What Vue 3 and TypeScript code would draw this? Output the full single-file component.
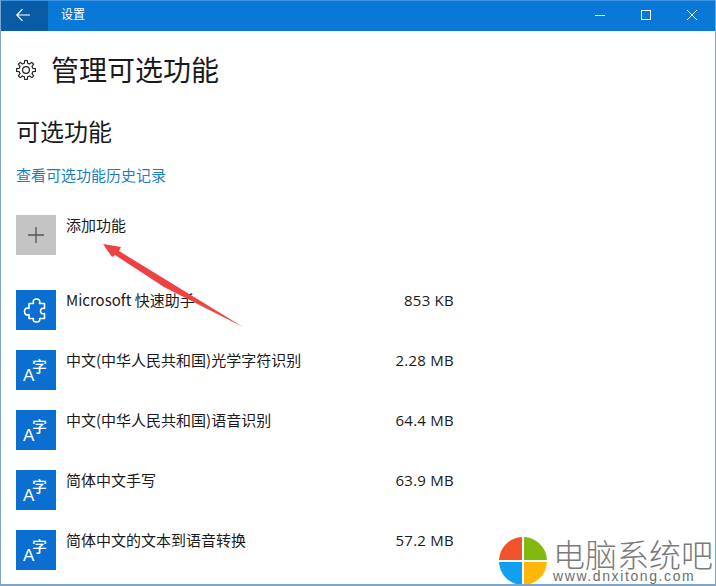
<script setup lang="ts">
interface Feature { name: string; size: string; kind: 'puzzle' | 'lang' }
const features: Feature[] = [
  { name: 'Microsoft 快速助手', size: '853 KB', kind: 'puzzle' },
  { name: '中文(中华人民共和国)光学字符识别', size: '2.28 MB', kind: 'lang' },
  { name: '中文(中华人民共和国)语音识别', size: '64.4 MB', kind: 'lang' },
  { name: '简体中文手写', size: '63.9 MB', kind: 'lang' },
  { name: '简体中文的文本到语音转换', size: '57.2 MB', kind: 'lang' },
]

function gearPath(teeth: number, outer: number, inner: number, c: number): string {
  const pts: string[] = []
  const step = (Math.PI * 2) / teeth
  const at = (r: number, a: number) =>
    `${(c + r * Math.cos(a)).toFixed(2)} ${(c + r * Math.sin(a)).toFixed(2)}`
  for (let i = 0; i < teeth; i++) {
    const a = i * step
    pts.push(at(inner, a - step * 0.3), at(outer, a - step * 0.17), at(outer, a + step * 0.17), at(inner, a + step * 0.3))
  }
  return `M${pts.join('L')}Z`
}
const gear = gearPath(8, 9.6, 7, 10)
</script>

<template>
  <div class="window">
    <header class="titlebar">
      <div class="back">
        <svg width="16" height="14" viewBox="0 0 16 14" fill="none" stroke="#fff" stroke-width="1.2"><path d="M15 7H2M7.500 1.200 1.800 7l5.700 5.800" /></svg>
      </div>
      <span class="app-title">设置</span>
      <div class="controls">
        <svg width="12" height="12" viewBox="0 0 12 12" fill="none" stroke="#fff" stroke-width="1"><path d="M1 6.500h10" /></svg>
        <svg width="12" height="12" viewBox="0 0 12 12" fill="none" stroke="#fff" stroke-width="1"><rect x="1.500" y="1.500" width="9" height="9" /></svg>
        <svg width="12" height="12" viewBox="0 0 12 12" fill="none" stroke="#fff" stroke-width="1"><path d="M1 1l10 10M11 1 1 11" /></svg>
      </div>
    </header>

    <main class="content">
      <div class="page-head">
        <svg class="gear" width="20" height="20" viewBox="0 0 20 20" fill="none" stroke="#222" stroke-width="1.200" stroke-linejoin="round">
          <circle cx="10" cy="10" r="3.400" />
          <path :d="gear" />
        </svg>
        <h1>管理可选功能</h1>
      </div>
      <h2>可选功能</h2>
      <a class="history">查看可选功能历史记录</a>

      <div class="add-row">
        <div class="tile add-tile">
          <svg width="16" height="16" viewBox="0 0 16 16" stroke="#555" stroke-width="1.300"><path d="M8 0v16M0 8h16" /></svg>
        </div>
        <span class="name">添加功能</span>
      </div>

      <ul class="list">
        <li v-for="f in features" :key="f.name" class="row">
          <div class="tile blue-tile">
            <svg v-if="f.kind === 'puzzle'" width="40" height="40" viewBox="0 0 40 40" fill="none" stroke="#fff" stroke-width="1.600" stroke-linejoin="round">
              <path d="M13 13.500h4.500c-1-3 .5-4.500 3-4.500s4 1.500 3 4.500h5v5c-2.500-.8-4 .5-4 2.500s1.500 3.300 4 2.500v5h-5c1 2.500-.5 3.500-3 3.500s-4-1-3-3.500H13v-4c-2.500 1-4.500 0-4.500-3s2-4 4.500-3z" />
            </svg>
            <template v-else>
              <span class="glyph-a">A</span><span class="glyph-zi">字</span>
            </template>
          </div>
          <span class="name">{{ f.name }}</span>
          <span class="size">{{ f.size }}</span>
        </li>
      </ul>
    </main>

    <svg class="arrow" width="150" height="95" viewBox="0 0 150 95">
      <path d="M1 3 19 6 17 10 141 86 62 46 13 14 10 16z" fill="#ee4242" />
    </svg>

    <div class="watermark">
      <svg width="50" height="50" viewBox="0 0 50 50">
        <path d="M24 1v23H1A24 24 0 0 1 24 1z" fill="#f0532b" />
        <path d="M26 1a24 24 0 0 1 23 23H26z" fill="#82b80f" />
        <path d="M1 26h23v23A24 24 0 0 1 1 26z" fill="#10a0ef" />
        <path d="M26 26h23a24 24 0 0 1-23 23z" fill="#ffb80a" />
      </svg>
      <div class="brand">
        <span class="brand-cn">电脑系统吧</span>
        <span class="brand-url">www.dnxitong.com</span>
      </div>
    </div>
  </div>
</template>

<style scoped>
.window {
  position: relative;
  box-sizing: border-box;
  width: 716px;
  height: 586px;
  overflow: hidden;
  background: #fff;
  border-left: 1px solid #7ba6d0;
  border-right: 1px solid #7ba6d0;
  border-bottom: 2px solid #7ba6d0;
  font-family: "Noto Sans CJK SC", "Open Sans", sans-serif;
  color: #1a1a1a;
}
.titlebar {
  display: flex;
  align-items: center;
  height: 31px;
  background: #0a78d7;
  border-top: 1px solid #3b94e4;
  box-sizing: border-box;
  color: #fff;
}
.back {
  display: flex;
  align-items: center;
  justify-content: center;
  width: 47px;
  height: 100%;
  background: #0a5ba6;
}
.back svg { margin-left: -4px; margin-top: -2px; }
.app-title { margin-left: 13px; font-size: 12px; line-height: 12px; margin-top: -4px; }
.controls {
  margin-left: auto;
  display: flex;
  gap: 34px;
  padding-right: 17px;
  margin-top: -2px;
}
.content { padding: 0 15px; }
.page-head {
  display: flex;
  align-items: center;
  gap: 16px;
  height: 40px;
  margin-top: 18px;
}
.gear { flex: none; margin-top: 2px; }
h1 { margin: 0 0 0 -1px; font-size: 28px; font-weight: 400; line-height: 40px; }
h2 { margin: 25px 0 0; font-size: 24px; font-weight: 400; line-height: 34px; }
.history {
  display: block;
  margin-top: 17px;
  font-size: 15px;
  line-height: 20px;
  color: #1a7fc0;
}
.add-row { display: flex; margin-top: 30px; }
.tile {
  flex: none;
  display: flex;
  align-items: center;
  justify-content: center;
  position: relative;
  width: 40px;
  height: 40px;
}
.add-tile { background: #c4c4c4; }
.blue-tile { background: #0a6fd0; color: #fff; }
.name {
  margin-left: 10px;
  font-size: 15px;
  line-height: 20px;
}
.list { list-style: none; margin: 35px 0 0; padding: 0; width: 438px; }
.row { display: flex; height: 40px; margin-bottom: 20px; }
.size {
  margin-left: auto;
  font-size: 15px;
  line-height: 20px;
  letter-spacing: 0.25px;
  font-family: "Open Sans", sans-serif;
}
.glyph-a {
  position: absolute;
  left: 7px;
  bottom: 6px;
  font: 400 17px/17px "Liberation Sans", sans-serif;
}
.glyph-zi {
  position: absolute;
  left: 16px;
  top: 8px;
  font-size: 15px;
  line-height: 15px;
  font-weight: 500;
}
.arrow { position: absolute; left: 101px; top: 241px; }
.watermark {
  position: absolute;
  right: -1px;
  bottom: -2px;
  display: flex;
  align-items: flex-end;
  gap: 5px;
  width: 219px;
  height: 60px;
  padding-left: 1px;
  background: #fff;
  box-sizing: border-box;
}
.brand { display: flex; flex-direction: column; padding-bottom: 3px; }
.brand-cn { font-size: 32px; line-height: 33px; font-weight: 300; color: #7a7a7a; white-space: nowrap; }
.brand-url { font: 400 14px/13px "Liberation Sans", sans-serif; letter-spacing: 1.600px; color: #6e6e6e; white-space: nowrap; }
</style>
